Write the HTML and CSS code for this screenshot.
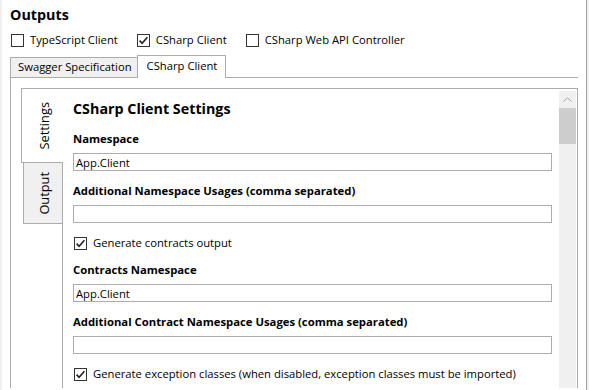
FILE: index.html
```html
<!DOCTYPE html>
<html lang="en">

<head>
    <meta charset="UTF-8">
    <meta name="viewport" content="width=device-width, initial-scale=1.0">
    <title>Outputs - CSharp Client Settings</title>
    <link rel="stylesheet" href="styles.css">
</head>

<body>

    <div class="window">

        <h2 class="title">Outputs</h2>

        <div class="outputs">
            <label class="check">
                <span class="box"></span>
                TypeScript Client
            </label>
            <label class="check">
                <span class="box">
                    <svg viewBox="0 0 11 11"><path d="M1.6 5.6 L4.1 8.2 L9.4 2.2"/></svg>
                </span>
                CSharp Client
            </label>
            <label class="check">
                <span class="box"></span>
                CSharp Web API Controller
            </label>
        </div>

        <div class="tab-strip">
            <div class="tab">Swagger Specification</div>
            <div class="tab active">CSharp Client</div>
        </div>

        <div class="tab-panel">
            <div class="vtab-strip">
                <div class="vtab active"><span>Settings</span></div>
                <div class="vtab"><span>Output</span></div>
            </div>

            <div class="vtab-panel">
                <div class="settings">
                    <h3 class="settings-title">CSharp Client Settings</h3>

                    <div class="field">
                        <label class="field-label">Namespace</label>
                        <input type="text" value="App.Client">
                    </div>

                    <div class="field">
                        <label class="field-label">Additional Namespace Usages (comma separated)</label>
                        <input type="text" value="">
                    </div>

                    <label class="check row">
                        <span class="box">
                            <svg viewBox="0 0 11 11"><path d="M1.6 5.6 L4.1 8.2 L9.4 2.2"/></svg>
                        </span>
                        Generate contracts output
                    </label>

                    <div class="field">
                        <label class="field-label">Contracts Namespace</label>
                        <input type="text" value="App.Client">
                    </div>

                    <div class="field">
                        <label class="field-label">Additional Contract Namespace Usages (comma separated)</label>
                        <input type="text" value="">
                    </div>

                    <label class="check row">
                        <span class="box">
                            <svg viewBox="0 0 11 11"><path d="M1.6 5.6 L4.1 8.2 L9.4 2.2"/></svg>
                        </span>
                        Generate exception classes (when disabled, exception classes must be imported)
                    </label>
                </div>

                <div class="scrollbar">
                    <div class="scroll-arrow">
                        <svg viewBox="0 0 9 5"><path d="M0.5 4.5 L4.5 0.8 L8.5 4.5"/></svg>
                    </div>
                    <div class="scroll-thumb"></div>
                </div>
            </div>
        </div>

    </div>

</body>

</html>
```
FILE: styles.css
```css
body {
    margin: 0;
    padding: 0;
    background-color: #f0f0f0;
    font-family: "Open Sans", sans-serif;
    font-size: 11.25px;
    line-height: 16px;
    color: #000;
    overflow: hidden;
}

.window {
    width: 576px;
    height: 385px;
    margin-left: 2px;
    padding: 5px 0 0 8px;
    background-color: #fff;
    border-right: 1px solid #a0a0a0;
}

.title {
    margin: 0;
    font-size: 14.3px;
    font-weight: bold;
    line-height: 20px;
}

/* checkboxes */

.outputs {
    display: flex;
    margin-top: 7px;
    padding-left: 1px;
}

.outputs .check {
    margin-right: 19px;
}

.check {
    display: flex;
    align-items: flex-start;
    white-space: nowrap;
}

.box {
    width: 11px;
    height: 11px;
    margin: 2px 6px 0 0;
    border: 1px solid #333;
    background-color: #fff;
    flex-shrink: 0;
}

.box svg {
    display: block;
    width: 11px;
    height: 11px;
}

.box path {
    fill: none;
    stroke: #212121;
    stroke-width: 1.6;
}

/* horizontal tabs */

.tab-strip {
    display: flex;
    align-items: flex-end;
    height: 22px;
    margin-top: 7px;
}

.tab {
    height: 20px;
    padding: 1px 5px 0 7px;
    border: 1px solid #acacac;
    border-bottom: none;
    background-color: #f0f0f0;
    box-sizing: border-box;
}

.tab.active {
    position: relative;
    z-index: 1;
    height: 23px;
    margin-left: -1px;
    margin-bottom: -1px;
    padding: 2px 8px 0 9px;
    background-color: #fff;
}

.tab-panel {
    display: flex;
    width: 557px;
    height: 300px;
    padding: 10px 0 0 10px;
    border-top: 1px solid #acacac;
    border-left: 1px solid #acacac;
}

/* vertical tabs */

.vtab-strip {
    display: flex;
    flex-direction: column;
    width: 41px;
    flex-shrink: 0;
}

.vtab {
    display: flex;
    align-items: center;
    justify-content: center;
    border: 1px solid #acacac;
    border-right: none;
    box-sizing: border-box;
    font-size: 12.8px;
}

.vtab span {
    writing-mode: vertical-rl;
    transform: rotate(180deg);
}

.vtab.active {
    position: relative;
    z-index: 1;
    height: 75px;
    margin-right: -1px;
    padding-left: 3px;
    background-color: #fff;
}

.vtab:not(.active) {
    height: 62px;
    margin: -1px 0 0 2px;
    padding-left: 1px;
    background-color: #f0f0f0;
}

.vtab-panel {
    display: flex;
    flex: 1;
    border: 1px solid #acacac;
    border-bottom: none;
}

.settings {
    flex: 1;
    padding: 0 7px 0 10px;
}

.settings-title {
    margin: 10px 0 12px;
    font-size: 14.3px;
    font-weight: bold;
    line-height: 20px;
}

.field {
    margin-bottom: 12px;
}

.field-label {
    display: block;
    margin-bottom: 6px;
    font-size: 11.3px;
    font-weight: bold;
}

.field input {
    display: block;
    width: 100%;
    height: 18px;
    margin: 0;
    padding: 0 2px;
    box-sizing: border-box;
    border: 1px solid #abadb3;
    font-family: inherit;
    font-size: inherit;
    line-height: 16px;
    color: #000;
    outline: none;
}

.check.row {
    margin-bottom: 11px;
    padding-left: 1px;
}

/* scrollbar */

.scrollbar {
    width: 17px;
    margin: 2px 1px 0 0;
    background-color: #f0f0f0;
}

.scroll-arrow {
    display: flex;
    align-items: center;
    justify-content: center;
    height: 17px;
}

.scroll-arrow svg {
    width: 9px;
    height: 5px;
}

.scroll-arrow path {
    fill: none;
    stroke: #a3a3a3;
    stroke-width: 1;
}

.scroll-thumb {
    height: 36px;
    background-color: #cdcdcd;
}
```
